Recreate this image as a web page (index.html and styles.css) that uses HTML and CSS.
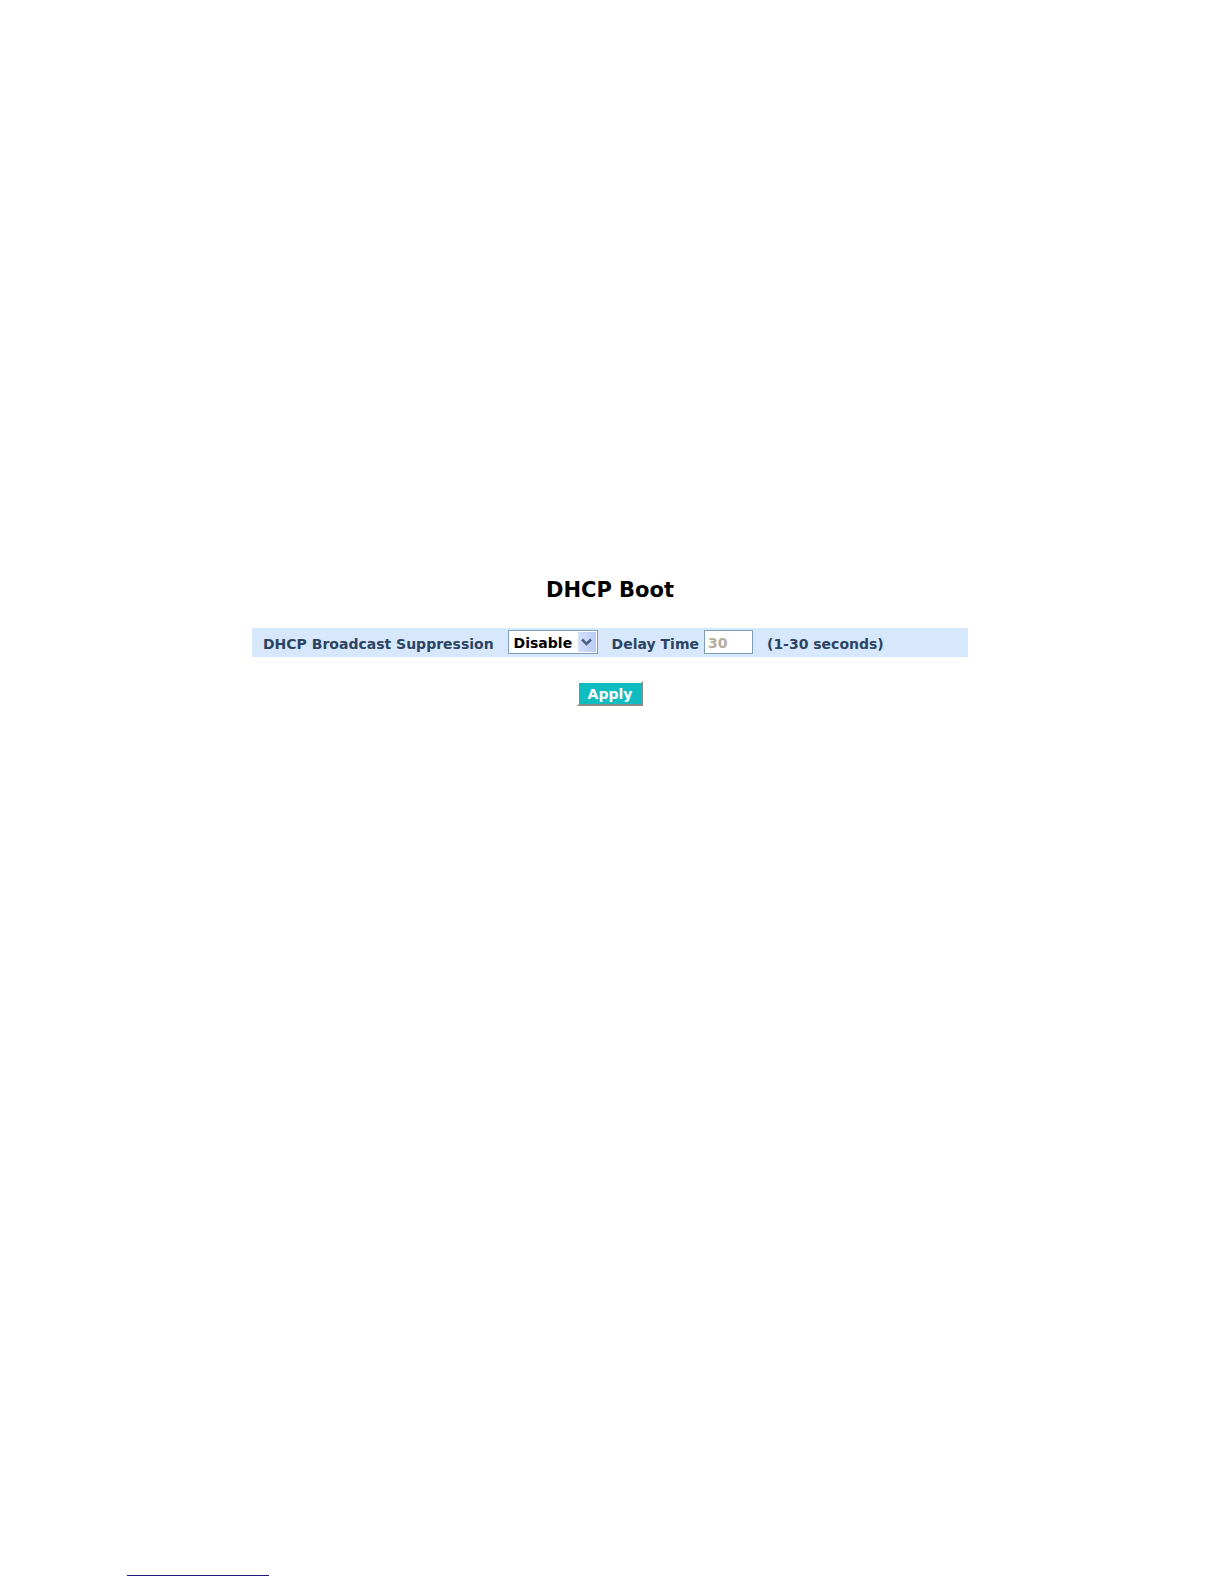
FILE: index.html
```html
<!DOCTYPE html>
<html lang="en">
<head>
<meta charset="utf-8">
<meta name="viewport" content="width=device-width, initial-scale=1">
<title>DHCP Boot</title>
<link rel="stylesheet" href="styles.css">
</head>
<body>
<main class="page">
  <h1 class="title">DHCP Boot</h1>
  <form class="form">
    <div class="settings">
      <label class="label" for="suppression">DHCP Broadcast Suppression</label>
      <span class="dropdown">
        <select class="select" id="suppression">
          <option selected>Disable</option>
          <option>Enable</option>
        </select>
        <span class="arrow">
          <svg width="11" height="8" viewBox="0 0 11 8" aria-hidden="true"><path d="M1 1.5 5.5 6 10 1.5" fill="none" stroke="#4d6185" stroke-width="2.5"/></svg>
        </span>
      </span>
      <span class="field">
        <label class="label" for="delay">Delay Time</label>
        <input class="input" id="delay" type="text" value="30" disabled>
      </span>
      <span class="label">(1-30 seconds)</span>
    </div>
    <button class="apply" type="button">Apply</button>
  </form>
</main>
<footer class="footer"><hr class="rule"></footer>
</body>
</html>
```
FILE: styles.css
```css
* {
  box-sizing: border-box;
}

body {
  display: flex;
  flex-direction: column;
  justify-content: space-between;
  min-height: 100vh;
  margin: 0;
  background: #fff;
  font: bold 14px/20px "DejaVu Sans", Verdana, sans-serif;
}

.page {
  padding: 576px 256px 0 252px;
}

.title {
  margin: 0 0 24px;
  color: #000;
  font-size: 21px;
  line-height: 28px;
  text-align: center;
}

.form {
  display: flex;
  flex-direction: column;
  align-items: center;
  gap: 24px;
}

.settings {
  display: flex;
  align-items: center;
  gap: 14px;
  width: 100%;
  padding: 2px 11px 3px;
  background: #d7e8fc;
}

.label {
  padding-top: 4px;
  color: #2c4463;
  white-space: nowrap;
}

.dropdown {
  position: relative;
  width: 90px;
  height: 24px;
}

.select,
.input {
  height: 24px;
  margin: 0;
  border: 1px solid #7f9db9;
  border-radius: 0;
  background: #fff;
  font: inherit;
}

.select {
  appearance: none;
  display: block;
  width: 100%;
  padding: 1px 20px 0 5px;
  color: #000;
}

.arrow {
  position: absolute;
  top: 2px;
  right: 2px;
  bottom: 2px;
  display: flex;
  align-items: center;
  justify-content: center;
  width: 18px;
  background: linear-gradient(90deg, #d3dffc, #b9cbf6);
  pointer-events: none;
}

.field {
  display: flex;
  align-items: center;
  gap: 5px;
}

.input {
  width: 49px;
  padding: 2px 3px 0;
  color: #b4ad9c;
}

.apply {
  height: 25px;
  padding: 0 9px;
  border: 2px solid;
  border-color: #fff #8b8b85 #8b8b85 #fff;
  border-radius: 0;
  background: #0fbcbf;
  color: #fff;
  font: inherit;
}

.footer {
  padding: 0 127px 8px;
}

.rule {
  width: 142px;
  height: 1px;
  margin: 0;
  border: 0;
  background: #1a1a80;
}
```
